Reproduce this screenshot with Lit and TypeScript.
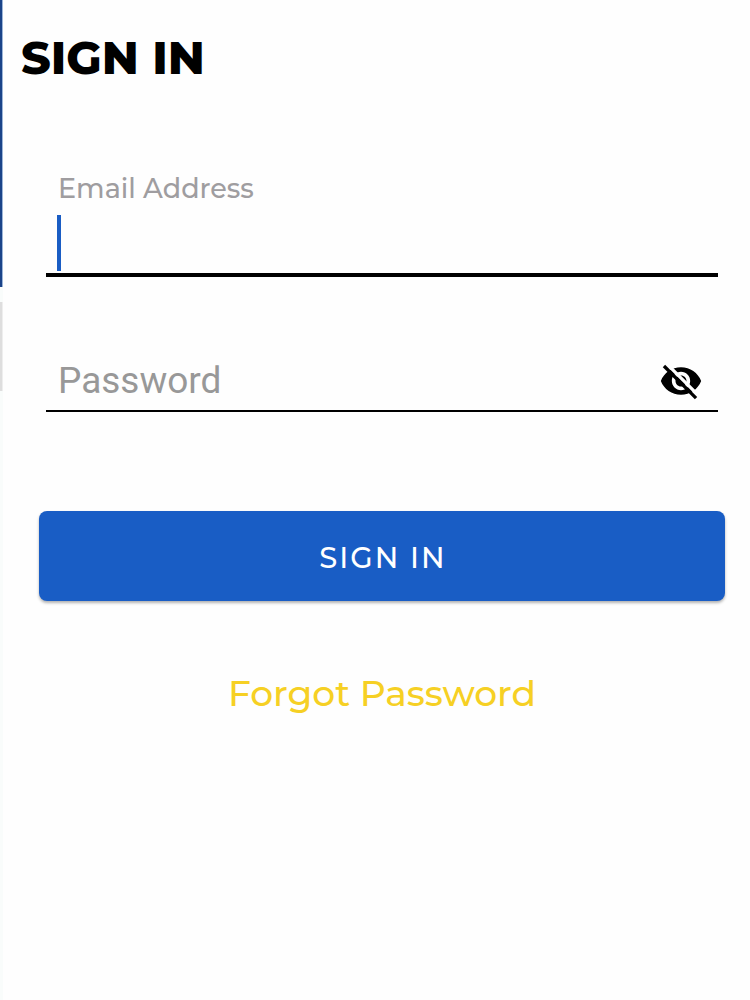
import { LitElement, html, css } from "lit";
import { customElement, state } from "lit/decorators.js";

@customElement("app-root")
export class AppRoot extends LitElement {
  static styles = css`
    :host {
      display: block;
      font-family: Montserrat, Inter, sans-serif;
      color: #000;
      background: #fefefe;
    }
    * {
      box-sizing: border-box;
    }
    .page {
      display: grid;
      grid-template-columns: 3px 1fr;
      min-height: 100vh;
    }
    .edge {
      display: flex;
      flex-direction: column;
      gap: 15px;
      background: #f9fcfb;
    }
    .edge-blue {
      height: 287px;
      background: #1b4489;
      border-right: 1px solid #9db6d8;
    }
    .edge-grey {
      height: 89px;
      background: #dedede;
      border-right: 1px solid #eeeeee;
    }
    main {
      padding: 29px 25px 40px 18px;
    }
    h1 {
      margin: 0;
      font-size: 46px;
      line-height: 58px;
      font-weight: 800;
    }
    form {
      display: flex;
      flex-direction: column;
      padding: 85px 0 0 18px;
    }
    .fields {
      display: flex;
      flex-direction: column;
      gap: 74px;
      padding: 0 7px;
    }
    .label {
      display: block;
      padding-left: 12px;
      font-size: 27px;
      line-height: 34px;
      font-weight: 500;
      color: #9f9da0;
    }
    .box {
      position: relative;
      display: flex;
      align-items: center;
      height: 71px;
      border-bottom: 4px solid #000;
    }
    .box.thin {
      height: 61px;
      border-bottom-width: 2px;
      padding-right: 15px;
    }
    .caret {
      position: absolute;
      left: 11px;
      top: 9px;
      bottom: 2px;
      width: 4px;
      background: #1a5dc4;
    }
    input {
      flex: 1;
      min-width: 0;
      height: 100%;
      padding: 0 12px;
      border: 0;
      outline: 0;
      background: none;
      font: 37px Roboto, sans-serif;
      color: #000;
    }
    .email {
      caret-color: transparent;
    }
    input::placeholder {
      color: #989898;
      opacity: 1;
    }
    button {
      border: 0;
      cursor: pointer;
      font-family: inherit;
    }
    .eye {
      display: flex;
      padding: 0;
      background: none;
    }
    .submit {
      height: 90px;
      margin-top: 99px;
      padding: 2px 0 0 2px;
      border-radius: 8px;
      background: #195dc5;
      color: #fff;
      font-size: 29px;
      font-weight: 500;
      letter-spacing: 2px;
      box-shadow: 0 2px 3px rgba(0, 0, 0, 0.3);
    }
    .forgot {
      align-self: center;
      margin-top: 68px;
      font-size: 36px;
      line-height: 48px;
      font-weight: 500;
      color: #f6d024;
      text-decoration: none;
    }
  `;

  @state() private visible = false;

  render() {
    return html`
      <div class="page">
        <div class="edge">
          <div class="edge-blue"></div>
          <div class="edge-grey"></div>
        </div>
        <main>
          <h1>SIGN IN</h1>
          <form @submit=${(e: Event) => e.preventDefault()}>
            <div class="fields">
              <div>
                <label class="label" for="email">Email Address</label>
                <div class="box">
                  <input class="email" id="email" type="email" />
                  <span class="caret"></span>
                </div>
              </div>
              <div class="box thin">
                <input
                  type=${this.visible ? "text" : "password"}
                  aria-label="Password"
                  placeholder="Password"
                />
                <button
                  class="eye"
                  type="button"
                  aria-label="Toggle password visibility"
                  @click=${() => (this.visible = !this.visible)}
                >
                  <svg width="44" height="44" viewBox="0 0 24 24">
                    <path
                      fill-rule="evenodd"
                      d="M12 4.5C7 4.5 2.73 7.61 1 12c1.73 4.39 6 7.5 11 7.5s9.27-3.11 11-7.5c-1.73-4.39-6-7.5-11-7.5zM12 17c-2.76 0-5-2.24-5-5s2.24-5 5-5 5 2.24 5 5-2.24 5-5 5zM12 9c-1.66 0-3 1.34-3 3s1.34 3 3 3 3-1.34 3-3-1.34-3-3-3z"
                    />
                    <path d="M4.4 2.8 22 20.4" stroke="#fefefe" stroke-width="1.8" />
                    <path d="M2.7 3.8 20.2 21.3" stroke="#000" stroke-width="1.8" />
                  </svg>
                </button>
              </div>
            </div>
            <button class="submit" type="submit">SIGN IN</button>
            <a class="forgot" href="#">Forgot Password</a>
          </form>
        </main>
      </div>
    `;
  }
}
